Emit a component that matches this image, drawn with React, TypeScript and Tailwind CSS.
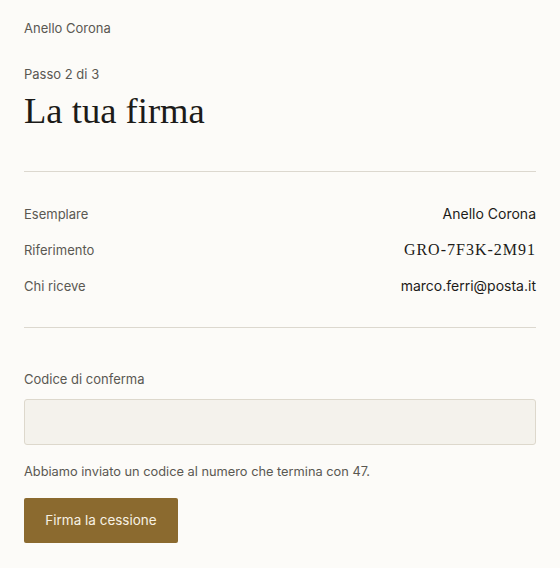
export default function App() {
  const rows = [
    { label: "Esemplare", value: "Anello Corona", serif: false },
    { label: "Riferimento", value: "GRO-7F3K-2M91", serif: true },
    { label: "Chi riceve", value: "marco.ferri@posta.it", serif: false },
  ];
  return (
    <div className="min-h-[568px] bg-[#fcfbf8] px-6 pt-[18px] font-['Inter',sans-serif] text-[#1c1b19]">
      <div className="text-[13px] leading-5 text-[#5a5852]">Anello Corona</div>
      <div className="mt-[26px] text-[13px] leading-5 text-[#5a5852]">Passo 2 di 3</div>
      <h1 className="mt-[5px] font-['Liberation_Serif',serif] text-[36.6px] leading-[44px] text-[#1c1b19]">
        La tua firma
      </h1>
      <div className="mt-[38px] border-t border-[#dcd8cf]" />
      <div className="flex flex-col gap-[14px] pt-[31px] pb-[30px]">
        {rows.map((r) => (
          <div key={r.label} className="flex h-[22px] items-center justify-between">
            <span className="text-[13px] leading-5 text-[#5a5852]">{r.label}</span>
            {r.serif ? (
              <span className="font-['Liberation_Serif',serif] text-[16px] leading-5 tracking-[1px] text-[#1c1b19]">
                {r.value}
              </span>
            ) : (
              <span className="text-[14px] leading-5 text-[#1c1b19]">{r.value}</span>
            )}
          </div>
        ))}
      </div>
      <div className="border-t border-[#dcd8cf]" />
      <label className="mt-[41px] block text-[13px] leading-5 text-[#5a5852]">Codice di conferma</label>
      <input
        className="mt-[10px] block h-[46px] w-full rounded-[3px] border border-[#ddd8cc] bg-[#f4f2ec] px-3 text-[15px] outline-none"
        type="text"
      />
      <p className="mt-[17px] text-[12.8px] leading-5 text-[#5a5852]">
        Abbiamo inviato un codice al numero che termina con 47.
      </p>
      <button className="mt-[16px] h-[45px] w-[154px] rounded-[2px] bg-[#8b6a2f] text-[13.5px] text-[#f7f1e3]">
        Firma la cessione
      </button>
    </div>
  );
}
